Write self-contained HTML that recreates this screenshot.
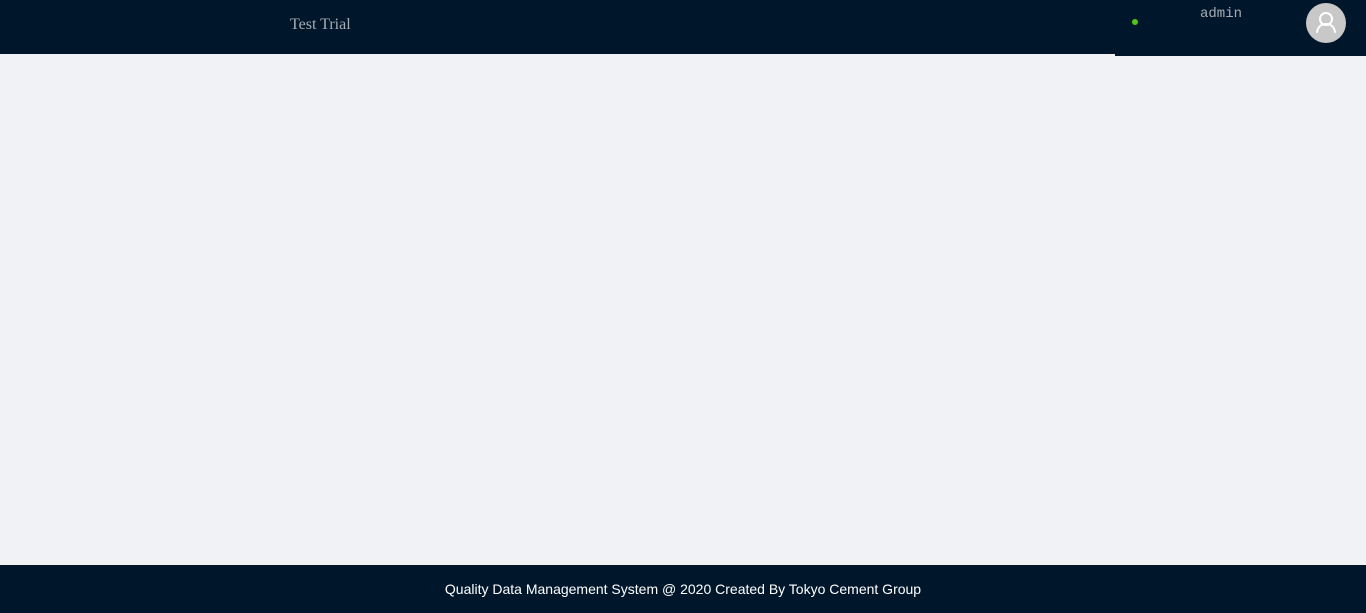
<!DOCTYPE html>
<html><head><meta charset="utf-8"><style>
html,body{margin:0;padding:0;width:1366px;height:613px;overflow:hidden;background:#f0f2f5;}
.hd{position:absolute;left:0;top:0;width:1366px;height:54px;background:#00172b;}
.hr{position:absolute;left:1115px;top:0;width:251px;height:56px;background:#00172b;}
.title{position:absolute;left:290px;top:16px;font:16px "Liberation Serif",serif;color:#a6adb4;}
.dot{position:absolute;left:1132px;top:19px;width:6px;height:6px;border-radius:50%;background:#52c41a;}
.admin{position:absolute;left:1200px;top:6px;font:14px "Liberation Mono",monospace;color:#a6adb4;}
.av{position:absolute;left:1306px;top:3px;width:40px;height:40px;border-radius:50%;background:#c8c8c8;}
.ft{position:absolute;left:0;top:565px;width:1366px;height:48px;background:#00172b;color:#fff;font:14px "Liberation Sans",sans-serif;text-align:center;line-height:48px;}
</style></head><body>
<div class="hd"></div><div class="hr"></div>
<div class="title">Test Trial</div>
<div class="dot"></div>
<div class="admin">admin</div>
<div class="av"><svg width="40" height="40" viewBox="0 0 40 40"><circle cx="20" cy="16" r="6" fill="none" stroke="#fff" stroke-width="2"/><path d="M11 29c1-6 5-8 9-8s8 2 9 8" fill="none" stroke="#fff" stroke-width="2" stroke-linecap="round"/></svg></div>
<div class="ft">Quality Data Management System @ 2020 Created By Tokyo Cement Group</div>
</body></html>
